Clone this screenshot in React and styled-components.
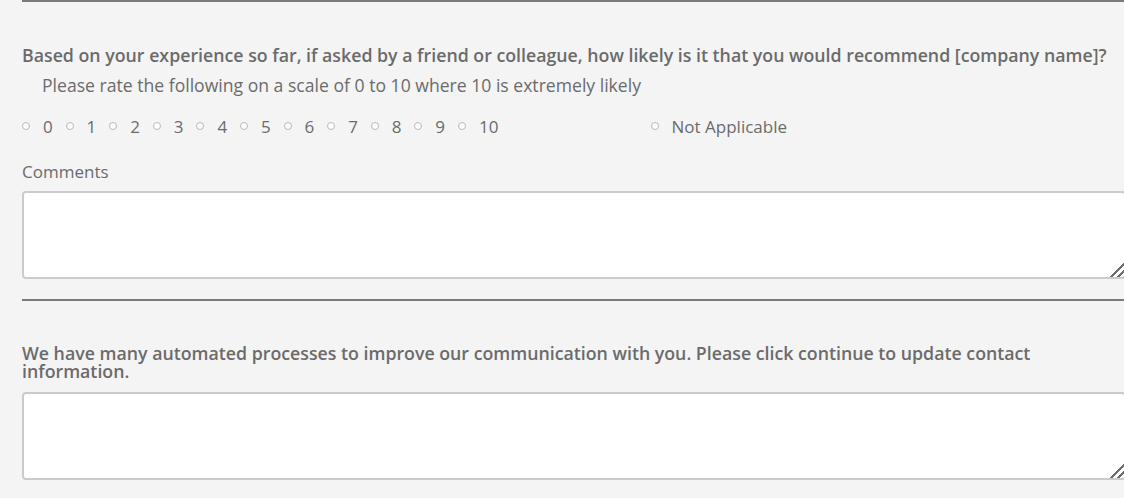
import React, { useState } from "react";
import styled, { createGlobalStyle } from "styled-components";

const GlobalStyle = createGlobalStyle`
  html, body {
    margin: 0;
    padding: 0;
    background: #f4f4f4;
    overflow: hidden;
  }
  body {
    font-family: "Open Sans", "Liberation Sans", sans-serif;
    color: #6b6b6b;
  }
`;

const Page = styled.div`
  width: 1104px;
  padding-left: 22px;
  display: flex;
  flex-direction: column;
`;

const Rule = styled.hr`
  margin: 0;
  border: none;
  border-top: 2px solid #7a7a7a;
  width: 100%;
`;

const Section = styled.section`
  display: flex;
  flex-direction: column;
  padding: ${(p) => p.pad || "0"};
`;

const Question = styled.label`
  font-size: 17.75px;
  font-weight: 600;
  line-height: ${(p) => p.lh || "22px"};
  color: #6b6b6b;
  max-width: ${(p) => p.maxWidth || "none"};
  white-space: ${(p) => (p.nowrap ? "nowrap" : "normal")};
`;

const Hint = styled.div`
  font-size: 17.6px;
  line-height: 22px;
  margin: 8px 0 0 20px;
`;

const RadioRow = styled.div`
  display: flex;
  align-items: center;
  margin-top: 19px;
  height: 22px;
`;

const Option = styled.label`
  display: flex;
  align-items: center;
  width: ${(p) => p.w || "43.6px"};
  margin-left: ${(p) => p.ml || "0"};
  font-size: 17px;
  cursor: pointer;
  flex-shrink: 0;
`;

const Dot = styled.input`
  appearance: none;
  margin: 0 13px 0 0;
  width: 8px;
  height: 8px;
  border-radius: 50%;
  border: 1px solid #b8b8b8;
  background: #fff;
  box-sizing: border-box;
  &:checked {
    background: #888;
  }
`;

const FieldLabel = styled.div`
  font-size: 17px;
  line-height: 22px;
  margin-top: 24px;
`;

const Box = styled.textarea`
  box-sizing: border-box;
  width: 100%;
  height: 88px;
  margin-top: ${(p) => p.mt || "8px"};
  border: 2px solid #cbcbcb;
  border-radius: 4px;
  background: #fff;
  font-family: inherit;
  font-size: 15px;
  outline: none;
  &::-webkit-resizer {
    background: linear-gradient(
      135deg,
      transparent 0 52%,
      #6e6e6e 52% 62%,
      transparent 62% 74%,
      #6e6e6e 74% 84%,
      transparent 84%
    );
  }
`;

const scale = Array.from({ length: 11 }, (_, i) => i);

export default function App() {
  const [score, setScore] = useState(null);
  return (
    <>
      <GlobalStyle />
      <Page>
        <Rule />
        <Section pad="42px 0 0 0">
          <Question nowrap>
            Based on your experience so far, if asked by a friend or colleague, how likely is it that you would recommend [company name]?
          </Question>
          <Hint>Please rate the following on a scale of 0 to 10 where 10 is extremely likely</Hint>
          <RadioRow>
            {scale.map((n) => (
              <Option key={n}>
                <Dot
                  type="radio"
                  name="nps"
                  checked={score === n}
                  onChange={() => setScore(n)}
                />
                {n}
              </Option>
            ))}
            <Option w="auto" ml="149px">
              <Dot
                type="radio"
                name="nps"
                checked={score === "na"}
                onChange={() => setScore("na")}
              />
              Not Applicable
            </Option>
          </RadioRow>
          <FieldLabel>Comments</FieldLabel>
          <Box mt="8px" />
        </Section>
        <Section pad="20px 0 0 0">
          <Rule />
        </Section>
        <Section pad="43px 0 0 0">
          <Question lh="18px" maxWidth="1030px">
            We have many automated processes to improve our communication with you. Please click continue to update contact information.
          </Question>
          <Box mt="12px" />
        </Section>
      </Page>
    </>
  );
}
